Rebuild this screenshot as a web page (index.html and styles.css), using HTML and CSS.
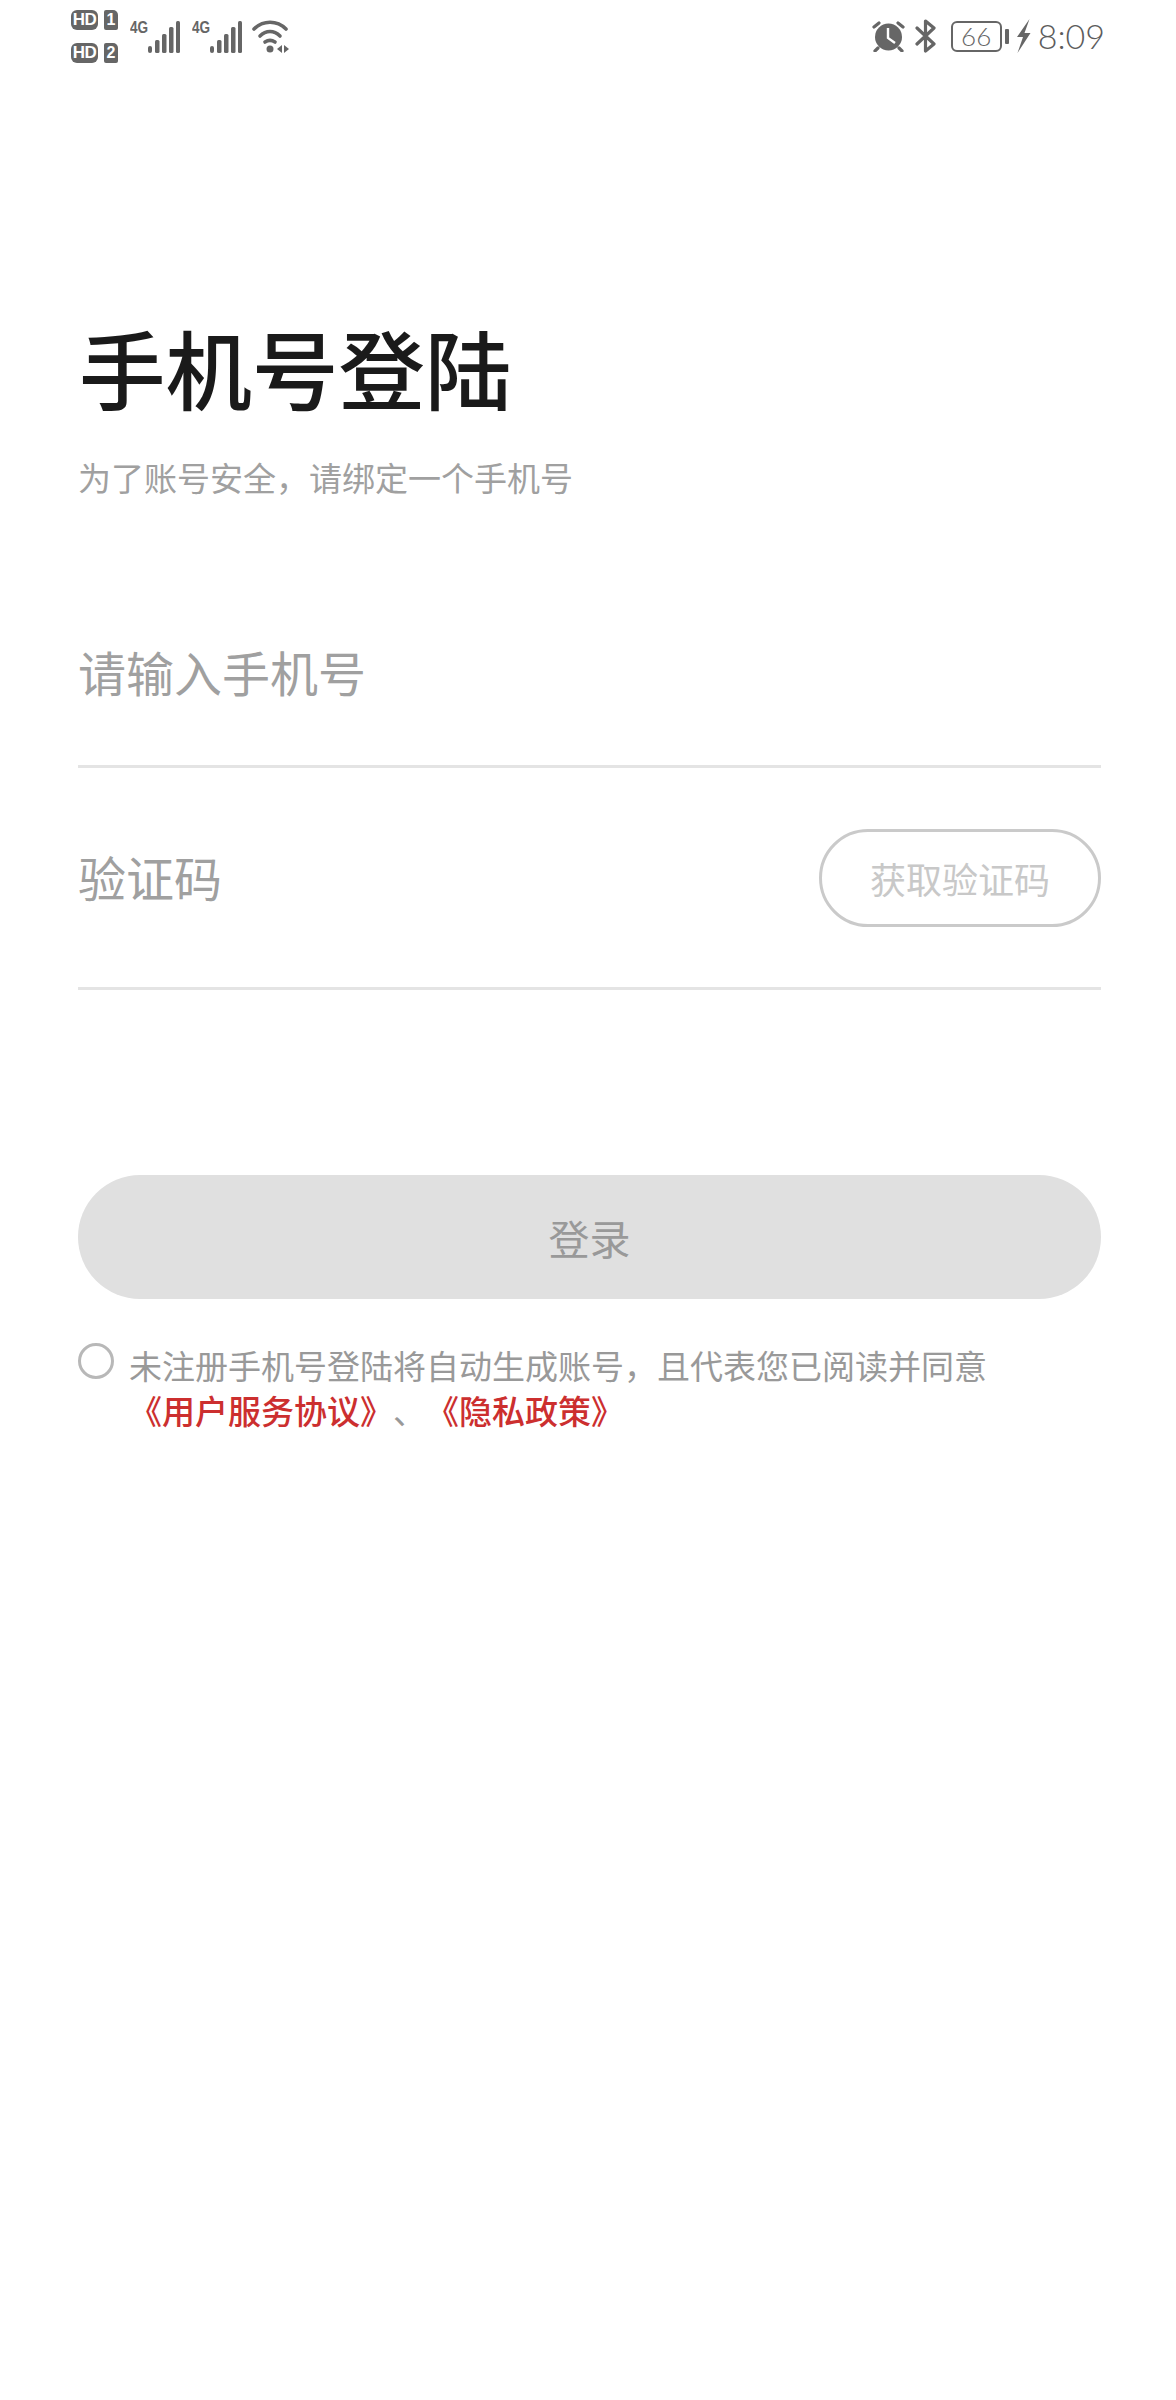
FILE: index.html
```html
<!DOCTYPE html>
<html lang="zh-CN">
<head>
<meta charset="utf-8">
<title>手机号登陆</title>
<link rel="stylesheet" href="styles.css">
</head>
<body>
<div class="status">
  <div class="status-left">
    <div class="sims">
      <div class="sim"><span class="hd">HD</span><span class="num">1</span></div>
      <div class="sim"><span class="hd">HD</span><span class="num">2</span></div>
    </div>
    <div class="net"><span class="g4">4G</span>
      <svg class="bars" width="32" height="32" viewBox="0 0 32 32"><g fill="#666"><rect x="0" y="25" width="4" height="7" rx="2"/><rect x="7" y="19" width="4.500" height="13" rx="1.500"/><rect x="14" y="13" width="4.500" height="19" rx="1.500"/><rect x="21" y="6" width="4.500" height="26" rx="1.500"/><rect x="28" y="0" width="4" height="32" rx="1.500"/></g></svg>
    </div>
    <div class="net"><span class="g4">4G</span>
      <svg class="bars" width="32" height="32" viewBox="0 0 32 32"><g fill="#666"><rect x="0" y="25" width="4" height="7" rx="2"/><rect x="7" y="19" width="4.500" height="13" rx="1.500"/><rect x="14" y="13" width="4.500" height="19" rx="1.500"/><rect x="21" y="6" width="4.500" height="26" rx="1.500"/><rect x="28" y="0" width="4" height="32" rx="1.500"/></g></svg>
    </div>
    <svg class="wifi" width="38" height="34" viewBox="0 0 38 34"><g fill="none" stroke="#666" stroke-width="3.600" stroke-linecap="round"><path d="M2 9C11 0 25 0 34 9"/><path d="M8 16C14 10 22 10 28 16"/><path d="M13 22C16 20 20 20 23 22"/></g><circle cx="18" cy="29" r="3.500" fill="#666"/><path d="M30 25v8l-5-4zM32 25v8l5-4z" fill="#666"/></svg>
  </div>
  <div class="status-right">
    <svg class="alarm" width="33" height="32" viewBox="0 0 33 32"><circle cx="16.500" cy="17" r="13.500" fill="#666"/><path d="M16 8v10l7 5" fill="none" stroke="#fff" stroke-width="2.400"/><path d="M2 7l5-4M31 7l-5-4M6 28l-3 3M27 28l3 3" stroke="#666" stroke-width="3.200" stroke-linecap="round"/></svg>
    <svg class="bt" width="22" height="34" viewBox="0 0 22 34"><path d="M2 9l17 16-8.500 7V2l8.500 7L2 25" fill="none" stroke="#666" stroke-width="3.200" stroke-linejoin="round" stroke-linecap="round"/></svg>
    <div class="battery"><div class="cell">66</div><div class="cap"></div></div>
    <svg class="bolt" width="15" height="34" viewBox="0 0 15 34"><path d="M13.500 0L1 18h6L1.500 34 14.500 14H8.500z" fill="#666"/></svg>
    <span class="clock">8:09</span>
  </div>
</div>

<main class="page">
  <h1 class="title">手机号登陆</h1>
  <p class="subtitle">为了账号安全，请绑定一个手机号</p>

  <div class="field field-phone"><span class="placeholder">请输入手机号</span></div>
  <div class="field field-code">
    <span class="placeholder">验证码</span>
    <button class="code-btn" type="button">获取验证码</button>
  </div>

  <button class="login" type="button">登录</button>

  <div class="agree">
    <span class="radio"></span>
    <p class="agree-text">未注册手机号登陆将自动生成账号，且代表您已阅读并同意<br><a class="link">《用户服务协议》</a><span class="sep">、</span><a class="link">《隐私政策》</a></p>
  </div>
</main>
</body>
</html>
```
FILE: styles.css
```css
* { box-sizing: border-box; }
html, body { margin: 0; padding: 0; background: #fff; }
body {
  width: 1176px;
  height: 2400px;
  overflow: hidden;
  font-family: "Noto Sans CJK SC", "Noto Sans", sans-serif;
  text-spacing-trim: space-all;
}

.status {
  height: 76px;
  padding: 8px 71px 0 71px;
  display: flex;
  justify-content: space-between;
  align-items: flex-start;
}
.status-left, .status-right { display: flex; align-items: center; height: 56px; }

.sims { display: flex; flex-direction: column; gap: 13px; }
.sim { display: flex; gap: 6px; height: 20px; align-items: stretch; }
.hd {
  width: 27px; border-radius: 6px; background: #666; color: #fff;
  font: 700 17px/20px "Liberation Sans", sans-serif; text-align: center; letter-spacing: -.5px;
}
.num {
  width: 14px; border-radius: 2px 5px 2px 2px; background: #666; color: #fff;
  font: 700 16px/20px "Liberation Sans", sans-serif; text-align: center;
}
.net { display: flex; align-items: flex-start; margin-left: 12px; height: 32px; margin-top: 2px; }
.g4 {
  width: 18px; margin-top: -2px;
  font: 700 17px/18px "Liberation Sans", sans-serif; color: #666;
  transform: scaleX(.8); transform-origin: left top;
}
.bars { width: 32px; }
.wifi { margin-left: 10px; margin-top: 2px; }

.alarm { margin-right: 10px; }
.bt { margin-right: 14px; }
.battery { display: flex; align-items: center; margin-right: 7px; }
.cell {
  width: 51px; height: 31px; border: 2.5px solid #666; border-radius: 6px;
  color: #666; font: 300 26px/26px Lato, sans-serif; text-align: center;
}
.cap { width: 4px; height: 15px; margin-left: 3px; background: #666; border-radius: 1px; }
.bolt { margin-right: 7px; }
.clock { font: 300 34px/40px Lato, sans-serif; color: #5c5c5c; }

.page { padding: 0 75px 0 78px; }
.title {
  margin: 242px 0 0 1px;
  font-size: 86.500px; line-height: 98px; font-weight: 500; color: #1a1a1a;
}
.subtitle { margin: 39px 0 0; font-size: 33px; line-height: 44px; color: #a0a0a0; }

.field {
  display: flex; justify-content: space-between; align-items: center;
  border-bottom: 3px solid #e4e4e4;
}
.field-phone { margin-top: 81px; height: 188px; }
.field-code { height: 222px; }
.placeholder { margin-top: -4px; font-size: 48px; line-height: 60px; color: #a0a0a0; }
.code-btn {
  width: 282px; height: 98px; padding: 0; background: #fff;
  border: 3px solid #cacaca; border-radius: 49px;
  color: #c8c8c8; font: 400 36px/44px "Noto Sans CJK SC", sans-serif;
}

.login {
  display: block; width: 100%; height: 124px; margin-top: 185px; padding: 0;
  border: 0; border-radius: 62px; background: #e0e0e0;
  color: #999; font: 400 41px/50px "Noto Sans CJK SC", sans-serif;
}

.agree { display: flex; margin-top: 44px; }
.radio {
  flex: none; width: 36px; height: 36px; margin-right: 15px;
  border: 3px solid #b8b8b8; border-radius: 50%;
}
.agree-text { margin: 0; font-size: 33px; line-height: 45px; color: #999; }
.link { color: #cc2f2f; font-weight: 500; }
.sep { color: #999; }
```
